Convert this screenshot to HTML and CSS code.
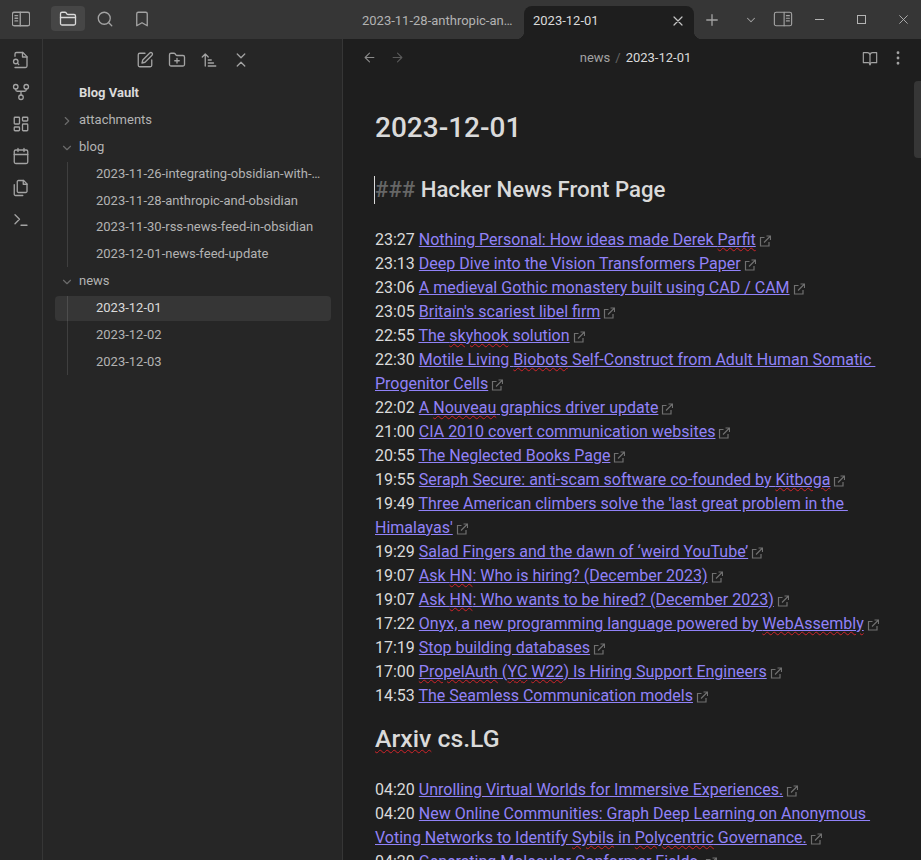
FILE: index.html
```html
<!DOCTYPE html>
<html lang="en">
<head>
    <meta charset="UTF-8">
    <meta name="viewport" content="width=device-width, initial-scale=1.0">
    <title>2023-12-01 - Blog Vault - Obsidian</title>
    <link rel="stylesheet" href="styles.css">
</head>
<body>
    <svg class="sprite" aria-hidden="true">
        <symbol id="i-sidebar-left" viewBox="0 0 24 24"><rect x="0.5" y="3" width="23" height="18" rx="2.5"/><path d="M11 3v18M4 7.500h3.500M4 11h3.500M4 14.500h3.500"/></symbol>
        <symbol id="i-sidebar-right" viewBox="0 0 24 24"><rect x="0.5" y="3" width="23" height="18" rx="2.5"/><path d="M13.500 3v18M16.500 7.500h4M16.500 11h4M16.500 14.500h4"/></symbol>
        <symbol id="i-folder" viewBox="0 0 24 24"><path d="M4 20h16a2 2 0 0 0 2-2V8a2 2 0 0 0-2-2h-7.930a2 2 0 0 1-1.660-.9l-.82-1.200A2 2 0 0 0 7.930 3H4a2 2 0 0 0-2 2v13c0 1.100.9 2 2 2Z"/><path d="M2 10h20"/></symbol>
        <symbol id="i-search" viewBox="0 0 24 24"><circle cx="11" cy="11" r="8"/><path d="m21 21-4.300-4.300"/></symbol>
        <symbol id="i-bookmark" viewBox="0 0 24 24"><path d="m19 21-7-4-7 4V5a2 2 0 0 1 2-2h10a2 2 0 0 1 2 2v16z"/></symbol>
        <symbol id="i-file-search" viewBox="0 0 24 24"><path d="M4 22h14a2 2 0 0 0 2-2V7.500L14.500 2H6a2 2 0 0 0-2 2v3"/><path d="M14 2v6h6"/><circle cx="5" cy="14" r="3"/><path d="m9 18-1.500-1.500"/></symbol>
        <symbol id="i-fork" viewBox="0 0 24 24"><circle cx="12" cy="19" r="3"/><circle cx="5" cy="5" r="3"/><circle cx="19" cy="5" r="3"/><path d="M19 8v1a2 2 0 0 1-2 2H7a2 2 0 0 1-2-2V8M12 11v5"/></symbol>
        <symbol id="i-dashboard" viewBox="0 0 24 24"><rect x="3" y="3" width="7" height="9" rx="1"/><rect x="14" y="3" width="7" height="5" rx="1"/><rect x="14" y="12" width="7" height="9" rx="1"/><rect x="3" y="16" width="7" height="5" rx="1"/></symbol>
        <symbol id="i-calendar" viewBox="0 0 24 24"><rect x="3" y="4" width="18" height="18" rx="2"/><path d="M16 2v4M8 2v4M3 10h18"/></symbol>
        <symbol id="i-files" viewBox="0 0 24 24"><path d="M15.500 2H8.600c-.4 0-.8.2-1.100.5-.3.3-.5.7-.5 1.100v12.800c0 .4.2.8.5 1.100.3.3.7.5 1.100.5h9.800c.4 0 .8-.2 1.100-.5.3-.3.5-.7.5-1.100V6.500L15.500 2z"/><path d="M3 7.600v12.800c0 .4.2.8.5 1.100.3.3.7.5 1.100.5h9.800"/><path d="M15 2v5h5"/></symbol>
        <symbol id="i-terminal" viewBox="0 0 24 24"><path d="m4 17 6-6-6-6M12 19h8"/></symbol>
        <symbol id="i-edit" viewBox="0 0 24 24"><path d="M12 3H5a2 2 0 0 0-2 2v14a2 2 0 0 0 2 2h14a2 2 0 0 0 2-2v-7"/><path d="M18.375 2.625a2.121 2.121 0 1 1 3 3L12 15l-4 1 1-4Z"/></symbol>
        <symbol id="i-folder-plus" viewBox="0 0 24 24"><path d="M4 20h16a2 2 0 0 0 2-2V8a2 2 0 0 0-2-2h-7.930a2 2 0 0 1-1.660-.9l-.82-1.200A2 2 0 0 0 7.930 3H4a2 2 0 0 0-2 2v13c0 1.100.9 2 2 2Z"/><path d="M12 10v6M9 13h6"/></symbol>
        <symbol id="i-sort" viewBox="0 0 24 24"><path d="m3 8 4-4 4 4M7 4v16M11 12h4M11 16h7M11 20h10"/></symbol>
        <symbol id="i-collapse" viewBox="0 0 24 24"><path d="m7 20 5-5 5 5M7 4l5 5 5-5"/></symbol>
        <symbol id="i-plus" viewBox="0 0 24 24"><path d="M5 12h14M12 5v14"/></symbol>
        <symbol id="i-x" viewBox="0 0 24 24"><path d="M18 6 6 18M6 6l12 12"/></symbol>
        <symbol id="i-down" viewBox="0 0 24 24"><path d="m6 9 6 6 6-6"/></symbol>
        <symbol id="i-right" viewBox="0 0 24 24"><path d="m9 18 6-6-6-6"/></symbol>
        <symbol id="i-back" viewBox="0 0 24 24"><path d="m12 19-7-7 7-7M19 12H5"/></symbol>
        <symbol id="i-forward" viewBox="0 0 24 24"><path d="M5 12h14M12 5l7 7-7 7"/></symbol>
        <symbol id="i-book" viewBox="0 0 24 24"><path d="M12 7a4 4 0 0 0-4-3H2v15h7a3 3 0 0 1 3 3 3 3 0 0 1 3-3h7V4h-6a4 4 0 0 0-4 3z"/><path d="M12 7v15"/></symbol>
        <symbol id="i-more" viewBox="0 0 24 24"><circle cx="12" cy="5" r="1"/><circle cx="12" cy="12" r="1"/><circle cx="12" cy="19" r="1"/></symbol>
        <symbol id="i-ext" viewBox="0 0 12 12"><path d="M5.500 2.500H1.500v8.500H10V7"/><path d="M5 7.500 11 1.500M7.500 1h4v4"/></symbol>
    </svg>

    <div class="app">
        <header class="titlebar">
            <div class="title-left">
                <span class="tb-btn"><svg class="icon"><use href="#i-sidebar-left"/></svg></span>
                <div class="tb-group">
                    <span class="tb-btn active"><svg class="icon"><use href="#i-folder"/></svg></span>
                    <span class="tb-btn"><svg class="icon"><use href="#i-search"/></svg></span>
                    <span class="tb-btn"><svg class="icon"><use href="#i-bookmark"/></svg></span>
                </div>
            </div>
            <div class="tabs">
                <div class="tab">2023-11-28-anthropic-and-obsidian</div>
                <div class="tab current">
                    <span>2023-12-01</span>
                    <svg class="icon tab-close"><use href="#i-x"/></svg>
                </div>
                <svg class="icon new-tab"><use href="#i-plus"/></svg>
            </div>
            <div class="title-right">
                <svg class="icon tab-list"><use href="#i-down"/></svg>
                <svg class="icon toggle-right"><use href="#i-sidebar-right"/></svg>
                <div class="window-controls">
                    <span class="win-btn"><span class="win-min"></span></span>
                    <span class="win-btn"><span class="win-max"></span></span>
                    <span class="win-btn"><svg class="win-close" viewBox="0 0 12 12"><path d="M1.500 1.500l9 9M10.500 1.500l-9 9"/></svg></span>
                </div>
            </div>
        </header>

        <div class="workspace">
            <nav class="ribbon">
                <svg class="icon"><use href="#i-file-search"/></svg>
                <svg class="icon"><use href="#i-fork"/></svg>
                <svg class="icon"><use href="#i-dashboard"/></svg>
                <svg class="icon"><use href="#i-calendar"/></svg>
                <svg class="icon"><use href="#i-files"/></svg>
                <svg class="icon"><use href="#i-terminal"/></svg>
            </nav>

            <aside class="sidebar">
                <div class="nav-buttons">
                    <svg class="icon"><use href="#i-edit"/></svg>
                    <svg class="icon"><use href="#i-folder-plus"/></svg>
                    <svg class="icon"><use href="#i-sort"/></svg>
                    <svg class="icon"><use href="#i-collapse"/></svg>
                </div>
                <div class="tree">
                    <div class="tree-row vault">Blog Vault</div>
                    <div class="tree-row folder"><svg class="chevron"><use href="#i-right"/></svg>attachments</div>
                    <div class="tree-row folder"><svg class="chevron"><use href="#i-down"/></svg>blog</div>
                    <div class="tree-children">
                        <div class="tree-row file"><span class="file-name">2023-11-26-integrating-obsidian-with-llm-models</span></div>
                        <div class="tree-row file"><span class="file-name">2023-11-28-anthropic-and-obsidian</span></div>
                        <div class="tree-row file"><span class="file-name">2023-11-30-rss-news-feed-in-obsidian</span></div>
                        <div class="tree-row file"><span class="file-name">2023-12-01-news-feed-update</span></div>
                    </div>
                    <div class="tree-row folder"><svg class="chevron"><use href="#i-down"/></svg>news</div>
                    <div class="tree-children">
                        <div class="tree-row file selected"><span class="file-name">2023-12-01</span></div>
                        <div class="tree-row file"><span class="file-name">2023-12-02</span></div>
                        <div class="tree-row file"><span class="file-name">2023-12-03</span></div>
                    </div>
                </div>
            </aside>

            <main class="main">
                <div class="view-header">
                    <div class="view-nav">
                        <svg class="icon back"><use href="#i-back"/></svg>
                        <svg class="icon forward"><use href="#i-forward"/></svg>
                    </div>
                    <div class="crumbs"><span class="crumb-dir">news</span><span class="crumb-sep">/</span><span class="crumb-file">2023-12-01</span></div>
                    <div class="view-actions">
                        <svg class="icon book"><use href="#i-book"/></svg>
                        <svg class="icon"><use href="#i-more"/></svg>
                    </div>
                </div>
                <div class="scroll-thumb"></div>
                <article class="note">
                    <h1 class="note-title">2023-12-01</h1>
                    <div class="heading first"><span class="caret"></span><span class="marks">### </span>Hacker News Front Page</div>
                    <div class="line">23:27 <a>Nothing Personal: How ideas made Derek <u>Parfit</u></a><svg class="ext"><use href="#i-ext"/></svg></div>
                    <div class="line">23:13 <a>Deep Dive into the Vision Transformers Paper</a><svg class="ext"><use href="#i-ext"/></svg></div>
                    <div class="line">23:06 <a>A medieval Gothic monastery built using CAD / CAM</a><svg class="ext"><use href="#i-ext"/></svg></div>
                    <div class="line">23:05 <a>Britain's scariest libel firm</a><svg class="ext"><use href="#i-ext"/></svg></div>
                    <div class="line">22:55 <a>The <u>skyhook</u> solution</a><svg class="ext"><use href="#i-ext"/></svg></div>
                    <div class="line">22:30 <a>Motile Living <u>Biobots</u> Self-Construct from Adult Human Somatic Progenitor Cells</a><svg class="ext"><use href="#i-ext"/></svg></div>
                    <div class="line">22:02 <a>A <u>Nouveau</u> graphics driver update</a><svg class="ext"><use href="#i-ext"/></svg></div>
                    <div class="line">21:00 <a>CIA 2010 covert communication websites</a><svg class="ext"><use href="#i-ext"/></svg></div>
                    <div class="line">20:55 <a>The Neglected Books Page</a><svg class="ext"><use href="#i-ext"/></svg></div>
                    <div class="line">19:55 <a>Seraph Secure: anti-scam software co-founded by <u>Kitboga</u></a><svg class="ext"><use href="#i-ext"/></svg></div>
                    <div class="line">19:49 <a>Three American climbers solve the 'last great problem in the Himalayas'</a><svg class="ext"><use href="#i-ext"/></svg></div>
                    <div class="line">19:29 <a>Salad Fingers and the dawn of ‘weird YouTube’</a><svg class="ext"><use href="#i-ext"/></svg></div>
                    <div class="line">19:07 <a>Ask <u>HN</u>: Who is hiring? (December 2023)</a><svg class="ext"><use href="#i-ext"/></svg></div>
                    <div class="line">19:07 <a>Ask <u>HN</u>: Who wants to be hired? (December 2023)</a><svg class="ext"><use href="#i-ext"/></svg></div>
                    <div class="line">17:22 <a>Onyx, a new programming language powered by <u>WebAssembly</u></a><svg class="ext"><use href="#i-ext"/></svg></div>
                    <div class="line">17:19 <a>Stop building databases</a><svg class="ext"><use href="#i-ext"/></svg></div>
                    <div class="line">17:00 <a><u>PropelAuth</u> (<u>YC</u> <u>W22</u>) Is Hiring Support Engineers</a><svg class="ext"><use href="#i-ext"/></svg></div>
                    <div class="line">14:53 <a>The Seamless Communication models</a><svg class="ext"><use href="#i-ext"/></svg></div>
                    <div class="heading second"><u>Arxiv</u> cs.LG</div>
                    <div class="line">04:20 <a>Unrolling Virtual Worlds for Immersive Experiences.</a><svg class="ext"><use href="#i-ext"/></svg></div>
                    <div class="line">04:20 <a>New Online Communities: Graph Deep Learning on Anonymous Voting Networks to Identify <u>Sybils</u> in <u>Polycentric</u> Governance.</a><svg class="ext"><use href="#i-ext"/></svg></div>
                    <div class="line">04:20 <a>Generating Molecular Conformer Fields.</a><svg class="ext"><use href="#i-ext"/></svg></div>
                </article>
            </main>
        </div>
    </div>
</body>
</html>
```

FILE: styles.css
```css
* {
    box-sizing: border-box;
}
html, body {
    margin: 0;
    height: 100%;
    overflow: hidden;
}
body {
    font-family: Roboto, sans-serif;
    font-size: 13px;
    background-color: #1e1e1e;
    color: #dadada;
}
.sprite {
    display: none;
}
.icon {
    width: 18px;
    height: 18px;
    flex: none;
    fill: none;
    stroke: #a3a3a3;
    stroke-width: 1.75;
    stroke-linecap: round;
    stroke-linejoin: round;
}
.app {
    display: flex;
    flex-direction: column;
    height: 860px;
}

/* title bar */
.titlebar {
    display: flex;
    height: 39px;
    flex: none;
    background-color: #363636;
}
.title-left {
    display: flex;
    width: 350px;
    flex: none;
    padding: 6px 0 0 4px;
}
.tb-group {
    display: flex;
    gap: 3px;
    margin-left: 13px;
}
.tb-btn {
    display: flex;
    align-items: center;
    justify-content: center;
    width: 34px;
    height: 25px;
    border-radius: 4px;
}
.tb-btn.active {
    background-color: #464646;
}
.tb-btn.active .icon {
    stroke: #dadada;
}
.tabs {
    display: flex;
    flex: none;
    padding-top: 6px;
}
.tab {
    width: 174px;
    padding: 0 8px 0 12px;
    height: 33px;
    line-height: 29px;
    color: #b3b3b3;
    white-space: nowrap;
    overflow: hidden;
    text-overflow: ellipsis;
}
.tab.current {
    position: relative;
    display: flex;
    justify-content: space-between;
    width: 170px;
    padding: 0 8px 0 9px;
    background-color: #1e1e1e;
    border-radius: 8px 8px 0 0;
    color: #dadada;
    overflow: visible;
}
.tab.current::before,
.tab.current::after {
    content: "";
    position: absolute;
    bottom: 0;
    width: 8px;
    height: 8px;
}
.tab.current::before {
    left: -8px;
    background: radial-gradient(circle at 0 0, transparent 8px, #1e1e1e 8.5px);
}
.tab.current::after {
    right: -8px;
    background: radial-gradient(circle at 100% 0, transparent 8px, #1e1e1e 8.5px);
}
.tab-close {
    width: 16px;
    height: 16px;
    margin-top: 7px;
    stroke: #c4c4c4;
    stroke-width: 1.8;
}
.new-tab {
    margin: 5px 0 0 9px;
}
.title-right {
    display: flex;
    flex: 1;
    padding-top: 10px;
    align-items: flex-start;
}
.tab-list {
    width: 14px;
    height: 14px;
    margin: 3px 0 0 23px;
}
.toggle-right {
    margin: 0 0 0 15px;
    width: 20px;
    height: 18px;
    stroke-width: 1.5;
}
.window-controls {
    display: flex;
    margin: -10px 0 0 0;
    padding-left: 5px;
}
.win-btn {
    display: flex;
    align-items: center;
    justify-content: center;
    width: 42px;
    height: 38px;
}
.win-min {
    width: 9px;
    height: 1px;
    background-color: #b3b3b3;
}
.win-max {
    width: 9px;
    height: 9px;
    border: 1px solid #b3b3b3;
}
.win-close {
    width: 11px;
    height: 11px;
    fill: none;
    stroke: #b3b3b3;
    stroke-width: 1;
}

/* layout below the title bar */
.workspace {
    display: flex;
    flex: 1;
    min-height: 0;
}
.ribbon {
    display: flex;
    flex-direction: column;
    align-items: center;
    gap: 14px;
    width: 43px;
    flex: none;
    padding: 12px 1px 0 0;
    background-color: #262626;
    border-right: 1px solid #363636;
}

/* file tree */
.sidebar {
    width: 300px;
    flex: none;
    padding: 0 11px 0 12px;
    background-color: #262626;
    border-right: 1px solid #363636;
}
.nav-buttons {
    display: flex;
    justify-content: center;
    gap: 14px;
    padding-top: 12px;
    height: 42px;
}
.tree {
    display: flex;
    flex-direction: column;
    gap: 2px;
}
.tree-row {
    position: relative;
    height: 24.9px;
    line-height: 24.9px;
    padding-left: 24px;
    color: #b3b3b3;
    border-radius: 4px;
    white-space: nowrap;
}
.tree-row.vault {
    font-weight: 700;
    color: #dadada;
}
.chevron {
    position: absolute;
    left: 5px;
    top: 6px;
    width: 14px;
    height: 14px;
    fill: none;
    stroke: #6b6b6b;
    stroke-width: 2;
    stroke-linecap: round;
    stroke-linejoin: round;
}
.tree-children {
    display: flex;
    flex-direction: column;
    gap: 2px;
    background: linear-gradient(#3f3f3f, #3f3f3f) 12px 0 / 1px 100% no-repeat;
}
.tree-row.file {
    padding: 0 10px 0 41px;
}
.file-name {
    display: block;
    overflow: hidden;
    text-overflow: ellipsis;
}
.tree-row.selected {
    background-color: rgba(255, 255, 255, 0.075);
    color: #dadada;
}

/* editor pane */
.main {
    position: relative;
    flex: 1;
    min-width: 0;
    background-color: #1e1e1e;
}
.view-header {
    display: flex;
    align-items: center;
    justify-content: space-between;
    height: 37px;
    padding: 0 14px 0 19px;
}
.view-nav {
    display: flex;
    gap: 13px;
}
.view-actions {
    display: flex;
    gap: 11px;
}
.view-nav .icon {
    width: 15px;
    height: 15px;
}
.book {
    width: 16px;
}
.back {
    stroke: #8a8a8a;
}
.forward {
    stroke: #5a5a5a;
}
.crumbs {
    display: flex;
    gap: 5px;
    margin-left: 4px;
    color: #a3a3a3;
}
.crumb-sep {
    color: #666;
}
.crumb-file {
    color: #dadada;
}
.scroll-thumb {
    position: absolute;
    right: 0;
    top: 42px;
    width: 7px;
    height: 77px;
    background-color: #363636;
    border-radius: 4px 0 0 4px;
}
.note {
    padding: 32px 40px 0 32px;
    font-size: 16px;
    line-height: 24px;
}
.note-title {
    margin: 0 0 27px;
    font-size: 28px;
    line-height: 40px;
    font-weight: 500;
}
.heading {
    position: relative;
    font-size: 22.2px;
    line-height: 28px;
    font-weight: 500;
}
.heading.first {
    margin-bottom: 25px;
}
.heading.second {
    margin: 17px 0 25px;
    font-size: 24.8px;
}
.marks {
    color: #666;
}
.caret {
    position: absolute;
    left: -1px;
    top: 1px;
    width: 1px;
    height: 28px;
    background-color: #dadada;
}
.line {
    white-space: break-spaces;
}
.line a {
    color: #9182f8;
    text-decoration: underline;
}
.line u, .heading u {
    text-decoration: underline wavy #d0242a 1px;
    text-underline-offset: 2px;
}
.ext {
    display: inline-block;
    width: 12px;
    height: 12px;
    margin-left: 3px;
    vertical-align: -2px;
    fill: none;
    stroke: #707070;
    stroke-width: 1.2;
}
```
